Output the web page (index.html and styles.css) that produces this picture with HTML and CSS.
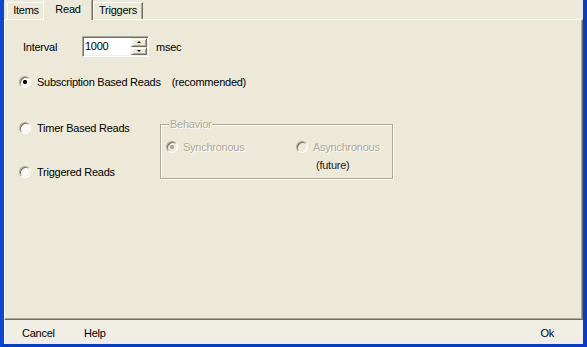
FILE: index.html
```html
<!DOCTYPE html>
<html>
<head>
<meta charset="utf-8">
<link rel="stylesheet" href="styles.css">
</head>
<body>
<div class="window">
  <div class="tabs">
    <div class="tab tab-items">Items</div>
    <div class="tab tab-read active">Read</div>
    <div class="tab tab-triggers">Triggers</div>
  </div>
  <div class="panel">
    <div class="interval-row">
      <span class="interval-label">Interval</span>
      <div class="spinner">
        <span class="spin-value">1000</span>
        <div class="spin-buttons">
          <span class="spin-btn up"></span>
          <span class="spin-btn down"></span>
        </div>
      </div>
      <span class="unit">msec</span>
    </div>
    <div class="radio-row first">
      <span class="radio checked"></span>
      <span class="radio-label">Subscription Based Reads</span>
      <span class="note">(recommended)</span>
    </div>
    <div class="lower">
      <div class="left-col">
        <div class="radio-row"><span class="radio"></span><span class="radio-label">Timer Based Reads</span></div>
        <div class="radio-row"><span class="radio"></span><span class="radio-label">Triggered Reads</span></div>
      </div>
      <div class="groupbox">
        <span class="group-label">Behavior</span>
        <div class="options">
          <div class="opt opt-sync">
            <span class="radio disabled checked"></span><span class="opt-label dis">Synchronous</span>
          </div>
          <div class="opt-async">
            <div class="opt"><span class="radio disabled"></span><span class="opt-label dis">Asynchronous</span></div>
            <div class="future">(future)</div>
          </div>
        </div>
      </div>
    </div>
  </div>
  <div class="footer">
    <span class="fbtn cancel">Cancel</span>
    <span class="fbtn help">Help</span>
    <span class="fbtn ok">Ok</span>
  </div>
</div>
</body>
</html>
```
FILE: styles.css
```css
* { box-sizing: border-box; }
html, body { margin: 0; padding: 0; background: #ECE9D8; }
body {
  font-family: "Liberation Sans", Arial, sans-serif;
  font-size: 11px;
  letter-spacing: -0.25px;
  color: #000;
}
.window {
  width: 587px;
  height: 347px;
  border-left: 4px solid #0D47D6;
  border-right: 4px solid #0A3BC8;
  border-bottom: 3px solid #0A3BC8;
  background: #ECE9D8;
  display: flex;
  flex-direction: column;
  overflow: hidden;
}
.tabs {
  height: 19px;
  flex: none;
  display: flex;
  align-items: flex-end;
  padding-left: 3px;
}
.tab {
  height: 17px;
  line-height: 15px;
  text-align: center;
  border-top: 1px solid #fff;
  border-left: 1px solid #fff;
  border-right: 1px solid #716F64;
  box-shadow: inset -1px 0 #ACA899;
  background: #ECE9D8;
}
.tab-items { width: 38px; }
.tab-read {
  width: 50px;
  margin-left: -2px;
  height: 20px;
  margin-bottom: -1px;
  border-top: none;
  line-height: 18px;
  position: relative;
  z-index: 1;
}
.tab-triggers { width: 50px; }
.panel {
  flex: 1;
  border-top: 1px solid #fff;
  border-left: 1px solid #fff;
  border-right: 1px solid #716F64;
  border-bottom: 1px solid #716F64;
  box-shadow: inset -1px -1px #ACA899;
  padding: 16px 0 0 14px;
}
.interval-row {
  display: flex;
  align-items: center;
  height: 21px;
  margin-left: 4px;
}
.interval-label { width: 59px; }
.spinner {
  display: flex;
  width: 67px;
  height: 21px;
  border: 1px solid;
  border-color: #ACA899 #fff #fff #ACA899;
  box-shadow: inset 1px 1px #716F64, inset -1px -1px #F1EFE2;
  background: #fff;
}
.spin-value {
  flex: 1;
  padding-left: 2px;
  line-height: 19px;
}
.spin-buttons {
  width: 16px;
  margin: 1px 1px 1px 0;
  display: flex;
  flex-direction: column;
}
.spin-btn {
  flex: 1;
  display: flex;
  align-items: center;
  justify-content: center;
  background: #ECE9D8;
  border: 1px solid;
  border-color: #F1EFE2 #716F64 #716F64 #F1EFE2;
  box-shadow: inset 1px 1px #fff, inset -1px -1px #ACA899;
}
.spin-btn::after {
  content: "";
  width: 0;
  height: 0;
  border-left: 2px solid transparent;
  border-right: 2px solid transparent;
}
.spin-btn.up::after { border-bottom: 2px solid #000; }
.spin-btn.down::after { border-top: 2px solid #000; }
.unit { margin-left: 7px; }
.radio-row {
  display: flex;
  align-items: center;
  height: 13px;
}
.radio-row.first { margin-top: 18px; }
.radio {
  width: 12px;
  height: 12px;
  flex: none;
  border-radius: 50%;
  border: 1px solid;
  border-color: #ACA899 #fff #fff #ACA899;
  box-shadow: inset 1px 1px #716F64, inset -1px -1px #F1EFE2;
  background: #fff;
}
.radio.checked {
  background: radial-gradient(circle at 50% 50%, #000 0, #000 1.8px, #fff 2.4px);
}
.radio.disabled { background: #ECE9D8; }
.radio.disabled.checked {
  background: radial-gradient(circle at 50% 50%, #ACA899 0, #ACA899 1.8px, #ECE9D8 2.4px);
}
.radio-label { margin-left: 6px; }
.note { margin-left: 11px; }
.lower {
  display: flex;
  align-items: flex-start;
  margin-top: 33px;
}
.left-col {
  width: 141px;
  display: flex;
  flex-direction: column;
  gap: 31px;
}
.groupbox {
  position: relative;
  margin-top: 3px;
  width: 233px;
  height: 55px;
  border: 1px solid #ACA899;
  box-shadow: inset 1px 1px #fff, 1px 1px #fff;
  padding: 15px 5px 0 5px;
}
.group-label {
  position: absolute;
  left: 8px;
  top: -7px;
  padding: 0 1px;
  line-height: 13px;
  background: #ECE9D8;
  color: #ACA899;
  text-shadow: 1px 1px #fff;
}
.options { display: flex; }
.opt {
  display: flex;
  align-items: center;
  height: 13px;
}
.opt-sync { width: 130px; }
.opt-label { margin-left: 5px; }
.dis { color: #ACA899; text-shadow: 1px 1px #fff; }
.future {
  margin-top: 6px;
  padding-left: 20px;
  line-height: 13px;
  color: #222;
}
.footer {
  height: 24px;
  flex: none;
  display: flex;
  align-items: center;
  padding: 2px 29px 0 17px;
  border-left: 1px solid #fff;
  background: #F0EEE5;
}
.cancel { width: 62px; }
.ok { margin-left: auto; }
```
